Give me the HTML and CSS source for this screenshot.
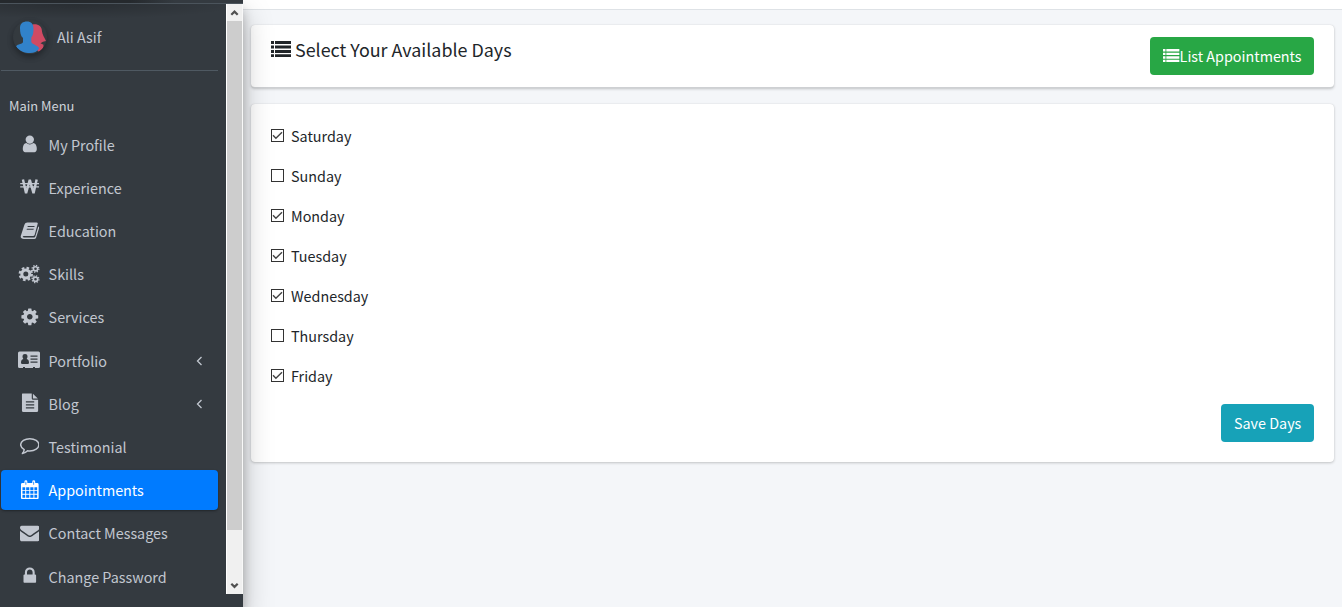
FILE: index.html
```html
<!DOCTYPE html>
<html lang="en">
<head>
<meta charset="utf-8">
<title>Available Days</title>
<link rel="stylesheet" href="styles.css">
</head>
<body>
<svg class="defs" width="0" height="0" aria-hidden="true">
  <symbol id="i-list" viewBox="0 0 20 16"><path d="M0 0h3v3H0zM4 0h16v3H4zM0 4.5h3v3H0zM4 4.5h16v3H4zM0 9h3v3H0zM4 9h16v3H4zM0 13.3h3V16H0zM4 13.3h16V16H4z"/></symbol>
  <symbol id="i-check" viewBox="0 0 13 13"><path d="M2 6.3l2.9 2.9L11 3.2" fill="none" stroke="#444" stroke-width="1.4"/></symbol>
  <symbol id="i-left" viewBox="0 0 7 10"><path d="M5.5 1L1.5 5l4 4" fill="none" stroke="currentColor" stroke-width="1.3"/></symbol>
</svg>
<aside class="sidebar">
  <div class="brand-edge"></div>
  <div class="side-body">
    <div class="side-content">
      <div class="user">
        <svg class="avatar" viewBox="0 0 34 34"><circle cx="17" cy="17" r="16.5" fill="#343a3f"/><path d="M19.500 4.500c5-1 9.500 1.500 9.500 7 .4 3 2.200 5.500 4 9.500l-3 .8-2.500 1.500 3 1.500c.5 3-1.500 5.500-4.500 7.200L16 22z" fill="#cf4a63"/><path d="M7 8c0-4.500 3-6.500 7-6.500s6.500 2 6.500 7.500c0 3-.4 6.500-2.200 8.500v4.500c1.300 2.700 6.300 3.200 7.900 6.200-2 3.300-5 4.800-9.200 4.800-5.500 0-11-2-14-6.800 2-2.500 6.600-1.700 7-4.200v-4C7.500 16 7 12 7 8z" fill="#3182ca"/></svg>
        <span class="user-name">Ali Asif</span>
      </div>
      <div class="menu-title">Main Menu</div>
      <nav class="menu">
        <a class="item"><svg class="icon" viewBox="0 0 1792 1792"><path d="M1536 1399q0 109-62.500 187t-150.500 78h-854q-88 0-150.500-78t-62.500-187q0-85 8.500-160.500t31.500-152 58.500-131 94-89 134.500-34.500q131 128 313 128t313-128q76 0 134.500 34.500t94 89 58.500 131 31.500 152 8.500 160.500zm-256-887q0 159-112.500 271.500t-271.500 112.500-271.500-112.500-112.500-271.500 112.500-271.500 271.500-112.500 271.500 112.500 112.500 271.500z"/></svg><span>My Profile</span></a>
        <a class="item"><svg class="icon" viewBox="0 0 20 20"><path d="M3 2.500L6.200 16.500 10 3l3.800 13.500L17 2.500" fill="none" stroke="currentColor" stroke-width="2.500" stroke-linejoin="bevel"/><path d="M.2 6.800h19.600M.2 10.100h19.600" stroke="currentColor" stroke-width="1.300"/></svg><span>Experience</span></a>
        <a class="item"><svg class="icon" viewBox="0 0 20 20"><path fill-rule="evenodd" d="M7.500 1.500H17q1.500 0 1 1.600L15 14q-.4 1.300-1.800 1.300H4q-1.300 0-1.200.8 0 .8 1.500.8h10q1 0 1.300-1L18.700 5.500q1.200.5.900 1.600l-3.100 9.700q-.5 1.600-2 1.600H4Q.4 18.400.7 15.500L4.500 3.800Q5.200 1.500 7.500 1.500z M8 5.100l-.4 1.100h7l.4-1.100zM7.100 7.900l-.4 1.100h7l.4-1.100z"/></svg><span>Education</span></a>
        <a class="item"><svg class="icon icon-wide" viewBox="0 0 22 20"><g fill="none" stroke="currentColor"><circle cx="7.800" cy="10" r="4" stroke-width="3"/><circle cx="7.800" cy="10" r="6.100" stroke-width="2.200" stroke-dasharray="2.600 2.190"/><circle cx="17.500" cy="4.800" r="2.100" stroke-width="1.600"/><circle cx="17.500" cy="4.800" r="3.400" stroke-width="1.300" stroke-dasharray="1.330 1.340"/><circle cx="17.500" cy="15.200" r="2.100" stroke-width="1.600"/><circle cx="17.500" cy="15.200" r="3.400" stroke-width="1.300" stroke-dasharray="1.330 1.340"/></g></svg><span>Skills</span></a>
        <a class="item"><svg class="icon" viewBox="0 0 1792 1792"><path d="M1152 896q0-106-75-181t-181-75-181 75-75 181 75 181 181 75 181-75 75-181zm512-109v222q0 12-8 23t-20 13l-185 28q-19 54-39 91 35 50 107 138 10 12 10 25t-9 23q-27 37-99 108t-94 71q-12 0-26-9l-138-108q-44 23-91 38-16 136-29 186-7 28-36 28h-222q-14 0-24.500-8.500t-11.500-21.500l-28-184q-49-16-90-37l-141 107q-10 9-25 9-14 0-25-11-126-114-165-168-7-10-7-23 0-12 8-23 15-21 51-66.500t54-70.500q-27-50-41-99l-183-27q-13-2-21-12.500t-8-23.500v-222q0-12 8-23t19-13l186-28q14-46 39-92-40-57-107-138-10-12-10-24 0-10 9-23 26-36 98.500-107.500t94.500-71.500q13 0 26 10l138 107q44-23 91-38 16-136 29-186 7-28 36-28h222q14 0 24.500 8.500t11.500 21.500l28 184q49 16 90 37l142-107q9-9 24-9 13 0 25 10 129 119 165 170 7 8 7 22 0 12-8 23-15 21-51 66.500t-54 70.500q26 50 41 98l183 28q13 2 21 12.500t8 23.500z"/></svg><span>Services</span></a>
        <a class="item"><svg class="icon icon-wide" viewBox="0 0 22 20"><path fill-rule="evenodd" d="M1.500 1.500h19Q22 1.500 22 3v13.500q0 1.500-1.500 1.500H17v-1h-2v1H7v-1H5v1H1.500Q0 18 0 16.500V3q0-1.500 1.500-1.500zM7 4C5 4 4.500 5.300 4.500 6.600c0 1 .3 1.700.8 2.300C3.600 9.300 3 10.600 3 12.800q0 1.200 1.200 1.200h5.600q1.200 0 1.200-1.200c0-2.200-.6-3.500-2.300-3.900.5-.6.800-1.300.8-2.300C9.500 5.300 9 4 7 4zM12.500 5.500v1.200h7V5.500zm0 3v1.200h7V8.500zm0 3v1.200h7v-1.200z"/></svg><span>Portfolio</span><svg class="arrow"><use href="#i-left"/></svg></a>
        <a class="item"><svg class="icon" viewBox="0 0 20 20"><path fill-rule="evenodd" d="M2.500.5H12v5q0 1.500 1.500 1.500h5v11q0 1.500-1.500 1.500H3.500Q2 19.500 2 18V1.500Q2 .5 2.500.5zM6 8.500v1.200h8.500V8.500zm0 3v1.200h8.500v-1.200zm0 3v1.200h8.500v-1.200zM13.200.8l5 4.900h-5z"/></svg><span>Blog</span><svg class="arrow"><use href="#i-left"/></svg></a>
        <a class="item"><svg class="icon" viewBox="0 0 20 20"><path d="M10 2.700c5 0 9.300 2.700 9.300 6.300s-4.300 6.300-9.300 6.300c-.8 0-1.600-.1-2.300-.2-1.600 1.600-3.200 2.600-5.300 2.900 1.200-1.300 1.700-2.600 1.900-4.100C2.300 12.700.7 11 .7 9c0-3.600 4.300-6.300 9.300-6.300z" fill="none" stroke="currentColor" stroke-width="1.500" stroke-linejoin="round"/></svg><span>Testimonial</span></a>
        <a class="item active"><svg class="icon" viewBox="0 0 20 20"><path fill-rule="evenodd" d="M2.500 3h2V1.700Q4.500.3 6 .3t1.500 1.400V3h5V1.700q0-1.400 1.500-1.400t1.500 1.400V3h2q1.500 0 1.500 1.500V18q0 1.500-1.500 1.500h-15Q1 19.500 1 18V4.500Q1 3 2.500 3zM2.500 7.500v2.600h2.800V7.500zm3.800 0v2.600h3.200V7.500zm4.200 0v2.600h3.200V7.500zm4.200 0v2.600h2.800V7.500zM2.500 11.100v3h2.800v-3zm3.800 0v3h3.200v-3zm4.200 0v3h3.200v-3zm4.200 0v3h2.800v-3zM2.500 15.100V18h2.800v-2.900zm3.800 0V18h3.200v-2.900zm4.200 0V18h3.200v-2.900zm4.200 0V18h2.800v-2.900zM5.600 1.700v3.200h.8V1.700zm8 0v3.200h.8V1.700z"/></svg><span>Appointments</span></a>
        <a class="item"><svg class="icon" viewBox="0 0 1792 1792"><path d="M1792 710v794q0 66-47 113t-113 47h-1472q-66 0-113-47t-47-113v-794q44 49 101 87 362 246 497 345 57 42 92.500 65.500t94.500 48 110 24.500h2q51 0 110-24.500t94.500-48 92.500-65.500q170-123 498-345 57-39 100-87zm0-294q0 79-49 151t-122 123q-376 261-468 325-10 7-42.500 31t-54 38.500-52 32.500-57.500 27-50 9h-2q-23 0-50-9t-57.500-27-52-32.500-54-38.500-42.500-31q-91-64-262-182.500t-205-142.500q-62-42-117-115.500t-55-136.500q0-78 41.500-130t118.500-52h1472q65 0 112.500 47t47.500 113z"/></svg><span>Contact Messages</span></a>
        <a class="item"><svg class="icon" viewBox="0 0 1792 1792"><path d="M640 768h512v-192q0-106-75-181t-181-75-181 75-75 181v192zm832 96v576q0 40-28 68t-68 28h-960q-40 0-68-28t-28-68v-576q0-40 28-68t68-28h32v-192q0-184 132-316t316-132 316 132 132 316v192h32q40 0 68 28t28 68z"/></svg><span>Change Password</span></a>
      </nav>
    </div>
    <div class="scrollbar">
      <svg class="sb-btn" viewBox="0 0 17 17"><path d="M5.300 10.800l3.200-3.200 3.200 3.200" fill="none" stroke="#505050" stroke-width="2.200"/></svg>
      <div class="thumb"></div>
      <svg class="sb-btn sb-down" viewBox="0 0 17 17"><path d="M5.300 6.700l3.200 3.200 3.200-3.200" fill="none" stroke="#505050" stroke-width="2.200"/></svg>
    </div>
  </div>
</aside>
<main class="main">
  <div class="topbar"></div>
  <section class="card heading-card">
    <h1 class="title"><svg class="title-icon"><use href="#i-list"/></svg><span>Select Your Available Days</span></h1>
    <a class="btn btn-green"><svg class="btn-icon" viewBox="0 0 20 16" preserveAspectRatio="none"><use href="#i-list"/></svg><span>List Appointments</span></a>
  </section>
  <section class="card days-card">
    <div class="days">
      <div class="day"><span class="box"><svg><use href="#i-check"/></svg></span><span>Saturday</span></div>
      <div class="day"><span class="box"></span><span>Sunday</span></div>
      <div class="day"><span class="box"><svg><use href="#i-check"/></svg></span><span>Monday</span></div>
      <div class="day"><span class="box"><svg><use href="#i-check"/></svg></span><span>Tuesday</span></div>
      <div class="day"><span class="box"><svg><use href="#i-check"/></svg></span><span>Wednesday</span></div>
      <div class="day"><span class="box"></span><span>Thursday</span></div>
      <div class="day"><span class="box"><svg><use href="#i-check"/></svg></span><span>Friday</span></div>
    </div>
    <a class="btn btn-teal"><span>Save Days</span></a>
  </section>
</main>
</body>
</html>
```
FILE: styles.css
```css
* { box-sizing: border-box; }
body {
  margin: 0;
  height: 607px;
  display: flex;
  overflow: hidden;
  background: #f4f6f9;
  color: #212529;
  font: 14.35px/24px "Source Sans Pro", "Noto Sans CJK SC", sans-serif;
}
.defs { position: absolute; }
svg { display: block; fill: currentColor; flex: none; }
.sidebar {
  width: 243px;
  height: 607px;
  flex: none;
  background: #343a40;
  color: #c2c7d0;
  position: relative;
  z-index: 1;
  box-shadow: 0 14px 28px rgba(0,0,0,.25), 0 10px 10px rgba(0,0,0,.22);
}
.brand-edge { height: 4px; background: linear-gradient(90deg, #25292d 0, #25292d 130px, #343a40 175px); border-bottom: 1px solid #4b545c; }
.side-body { display: flex; height: 590px; }
.side-content {
  width: 226px;
  padding: 0 8px 0 1px;
  background: radial-gradient(ellipse 170px 15px at 75px 0, rgba(0,0,0,.22), transparent);
}
.user { height: 67px; display: flex; align-items: center; padding-left: 12px; gap: 10px; border-bottom: 1px solid #4f5962; }
.avatar { width: 34px; height: 34px; border-radius: 50%; box-shadow: 0 3px 6px rgba(0,0,0,.16), 0 3px 6px rgba(0,0,0,.23); }
.menu-title { font-size: 12.9px; line-height: 20px; padding: 25px 0 0 8px; color: #d0d4db; }
.menu { display: flex; flex-direction: column; gap: 3.2px; margin-top: 8.700px; }
.item { height: 40px; display: flex; align-items: center; padding: 0 15px 0 17px; border-radius: 4px; }
.item span { margin-left: 8px; }
.icon { width: 19.6px; height: 19.6px; margin: -1.500px 1.500px 0; }
.icon-wide { width: 22px; height: 20px; margin: -1.500px .3px 0; }
.arrow { width: 7px; height: 10px; margin: 1px 0 0 auto; }
.active { background: #007bff; color: #fff; box-shadow: 0 1px 3px rgba(0,0,0,.12), 0 1px 2px rgba(0,0,0,.24); }
.scrollbar { width: 17px; background: #f0f0f0; border-left: 1px solid #fff; border-right: 1px solid #f8f8f8; display: flex; flex-direction: column; align-items: center; }
.sb-btn { width: 17px; height: 17px; }
.sb-down { margin-top: auto; }
.thumb { width: 15px; height: 509px; background: #cdcdcd; }
.main { flex: 1; min-width: 0; }
.topbar { height: 10px; background: #fff; border-bottom: 1px solid #dee2e6; }
.card { margin: 15px 8px 0; background: #fff; border-radius: 4px; box-shadow: 0 0 1px rgba(0,0,0,.125), 0 1px 3px rgba(0,0,0,.2); }
.heading-card { height: 63px; display: flex; justify-content: space-between; align-items: flex-start; padding: 12px 20px; border-bottom: 1px solid #ced0d3; }
.title { margin: 0; display: flex; align-items: center; gap: 4px; font-size: 17.9px; line-height: 24px; font-weight: 400; }
.title-icon { width: 20px; height: 16px; margin-top: -1px; }
.btn { height: 38px; display: flex; align-items: center; padding: 0 13px; border-radius: 4px; color: #fff; white-space: nowrap; }
.btn-green { background: #28a745; width: 164px; }
.btn-icon { width: 16.6px; height: 13px; margin-top: -2px; }
.btn-teal { background: #17a2b8; width: 93px; align-self: flex-end; }
.days-card { height: 358px; margin-top: 16px; padding: 20px; display: flex; flex-direction: column; }
.days { display: flex; flex-direction: column; gap: 16px; margin-bottom: 16px; }
.day { height: 24px; display: flex; align-items: center; gap: 7px; }
.box { width: 13px; height: 13px; border: 1px solid #333; margin-top: -1px; }
.box svg { width: 13px; height: 13px; margin: -1px; }
```
